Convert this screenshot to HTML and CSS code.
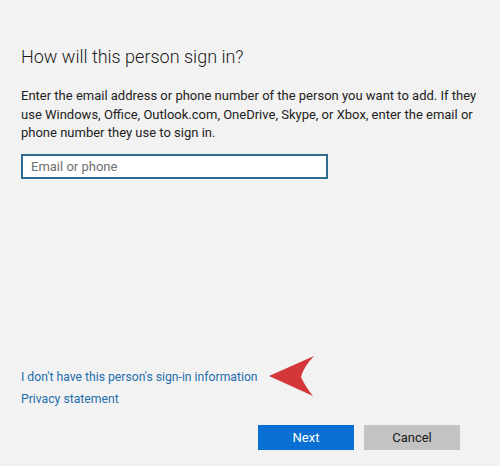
FILE: index.html
```html
<!DOCTYPE html>
<html lang="en">
<head>
  <meta charset="UTF-8" />
  <title>Add a user</title>
  <link rel="stylesheet" href="styles.css">
</head>
<body>
  <div class="dialog">
    <h1 class="title">How will this person sign in?</h1>
    <p class="intro">Enter the email address or phone number of the person you want to add. If they use Windows, Office, Outlook.com, OneDrive, Skype, or Xbox, enter the email or phone number they use to sign in.</p>
    <input class="field" type="text" placeholder="Email or phone">

    <div class="links">
      <div class="link-row">
        <a class="link" href="#">I don't have this person's sign-in information</a>
        <!-- pointer arrow -->
        <svg class="pointer" width="50" height="42" viewBox="0 0 50 42">
          <path d="M1 20 L46 0 Q36 10 33 21 Q37 30 45 40 Z" fill="#d4373a"/>
        </svg>
      </div>
      <a class="link" href="#">Privacy statement</a>
    </div>

    <div class="actions">
      <button class="btn btn-primary">Next</button>
      <button class="btn btn-secondary">Cancel</button>
    </div>
  </div>
</body>
</html>
```

FILE: styles.css
```css
body {
  margin: 0;
  background: #f2f2f2;
  font-family: Roboto, "Noto Sans", Arial, sans-serif;
  color: #1f1f1f;
}

.dialog {
  padding: 43px 21px 0 21px;
  width: 458px;
}

.title {
  margin: 0;
  font-size: 18px;
  font-weight: 300;
  line-height: 28px;
  color: #1a1a1a;
}

.intro {
  margin: 16px 0 0 0;
  font-size: 13px;
  line-height: 18.5px;
  color: #222;
}

.field {
  display: block;
  margin-top: 11px;
  width: 307px;
  height: 25px;
  box-sizing: border-box;
  border: 2px solid #2d6b8f;
  background: #fff;
  padding: 0 8px;
  font-family: inherit;
  font-size: 13px;
  outline: none;
}

.field::placeholder {
  color: #707070;
}

.links {
  margin-top: 189px;
  display: flex;
  flex-direction: column;
  gap: 4px;
}

.link-row {
  display: flex;
  align-items: center;
  gap: 10px;
  height: 18px;
}

.pointer {
  flex: none;
}

.link {
  color: #1f6eac;
  text-decoration: none;
  font-size: 12.2px;
  line-height: 18px;
}

.actions {
  display: flex;
  justify-content: flex-end;
  gap: 10px;
  margin: 17px 19px 0 0;
}

.btn {
  width: 96px;
  height: 25px;
  border: none;
  font-family: inherit;
  font-size: 13px;
}

.btn-primary {
  background: #0a6fd2;
  color: #fff;
}

.btn-secondary {
  background: #c3c3c3;
  color: #1a1a1a;
}
```
